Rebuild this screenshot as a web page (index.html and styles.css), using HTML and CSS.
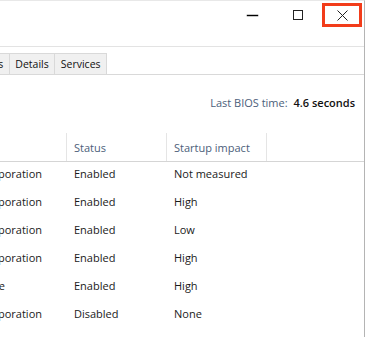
FILE: index.html
```html
<!DOCTYPE html>
<html lang="en">
<head>
    <meta charset="UTF-8">
    <meta name="viewport" content="width=device-width,initial-scale=1" />
    <title>Task Manager - Startup</title>
    <link rel="stylesheet" href="styles.css">
</head>
<body>
<div class="window">
    <div class="titlebar">
        <div class="btn minimize"><span class="dash"></span></div>
        <div class="btn maximize">
            <svg width="10" height="10" viewBox="0 0 10 10">
                <rect x="0.5" y="0.5" width="9" height="9" stroke="#222" stroke-width="1" fill="none"/>
            </svg>
        </div>
        <div class="btn close">
            <svg width="11" height="11" viewBox="0 0 11 11">
                <path d="M0.5 0.5 L10.5 10.5 M10.5 0.5 L0.5 10.5" stroke="#222" stroke-width="1" fill="none"/>
            </svg>
        </div>
    </div>
    <div class="tabs">
        <div class="tab first">Users</div>
        <div class="tab">Details</div>
        <div class="tab">Services</div>
    </div>
    <div class="bios">
        <span class="label">Last BIOS time:</span>
        <span class="value">4.6 seconds</span>
    </div>
    <div class="grid">
        <div class="row head">
            <div class="cell publisher"></div>
            <div class="cell status">Status</div>
            <div class="cell impact">Startup impact</div>
            <div class="cell rest"></div>
        </div>
        <div class="row">
            <div class="cell publisher"><span>Microsoft Corporation</span></div>
            <div class="cell status">Enabled</div>
            <div class="cell impact">Not measured</div>
        </div>
        <div class="row">
            <div class="cell publisher"><span>Microsoft Corporation</span></div>
            <div class="cell status">Enabled</div>
            <div class="cell impact">High</div>
        </div>
        <div class="row">
            <div class="cell publisher"><span>Microsoft Corporation</span></div>
            <div class="cell status">Enabled</div>
            <div class="cell impact">Low</div>
        </div>
        <div class="row">
            <div class="cell publisher"><span>Microsoft Corporation</span></div>
            <div class="cell status">Enabled</div>
            <div class="cell impact">High</div>
        </div>
        <div class="row">
            <div class="cell publisher short"><span>Apple</span></div>
            <div class="cell status">Enabled</div>
            <div class="cell impact">High</div>
        </div>
        <div class="row">
            <div class="cell publisher"><span>Microsoft Corporation</span></div>
            <div class="cell status">Disabled</div>
            <div class="cell impact">None</div>
        </div>
    </div>
</div>
</body>
</html>
```

FILE: styles.css
```css
html,body{
    margin: 0;
    padding: 0;
    background-color: white;
}
body{
    width: 366px;
    height: 337px;
    overflow: hidden;
    font-family: "Open Sans", "Noto Sans", sans-serif;
    font-size: 11px;
    color: #1a1a1a;
}
.window{
    width: 365px;
    height: 337px;
    border-top: 1px solid #e8e8e8;
    border-right: 1px solid #b4b4b4;
    box-sizing: border-box;
    overflow: hidden;
}
.titlebar{
    height: 46px;
    display: flex;
    justify-content: flex-end;
    align-items: flex-start;
    padding: 2px 2px 0 0;
    box-sizing: border-box;
    border-bottom: 1px solid #e3e3e3;
}
.btn{
    width: 45px;
    height: 24px;
    flex-shrink: 0;
    display: flex;
    align-items: center;
    justify-content: center;
    box-sizing: border-box;
}
.btn svg{
    display: block;
}
.btn.minimize{
    padding-top: 1px;
}
.dash{
    display: block;
    width: 11px;
    height: 1px;
    background-color: #000;
    box-shadow: 0 0 0 0.3px #444;
}
.btn.maximize{
    margin-right: 2px;
}
.btn.close{
    width: 40px;
    border: 3px solid #f23c1a;
}
.tabs{
    display: flex;
    padding-top: 6px;
    margin-left: -31px;
    border-bottom: 1px solid #d9d9d9;
}
.tab{
    height: 20px;
    line-height: 21px;
    padding: 0 5.5px;
    background-color: #f0f0f0;
    border: 1px solid #d9d9d9;
    border-bottom: 0;
    border-left: 0;
    color: #111;
    font-size: 10.5px;
}
.tab.first{
    border-left: 1px solid #d9d9d9;
}
.bios{
    text-align: right;
    padding: 18px 9px 0 0;
    height: 20px;
    line-height: 20px;
    margin-bottom: 19px;
}
.bios .label{
    color: #4c607a;
    margin-right: 3px;
}
.bios .value{
    color: #111;
    font-weight: 600;
}
.row{
    display: flex;
    height: 28px;
    line-height: 22px;
}
.row.head{
    height: 30px;
    line-height: 30px;
    padding-top: 1px;
    box-sizing: border-box;
    border-bottom: 1px solid #d5d5d5;
    color: #4c607a;
    margin-bottom: 1px;
}
.cell{
    box-sizing: border-box;
    white-space: nowrap;
    padding-left: 7px;
}
.head .cell{
    border-right: 1px solid #e5e5e5;
}
.head .cell.rest{
    border-right: 0;
}
.cell.publisher{
    width: 67px;
    padding: 0 25px 0 0;
    display: flex;
    justify-content: flex-end;
    overflow: hidden;
}
.cell.publisher.short{
    padding-right: 62px;
}
.cell.status,
.cell.impact{
    width: 100px;
}
```
